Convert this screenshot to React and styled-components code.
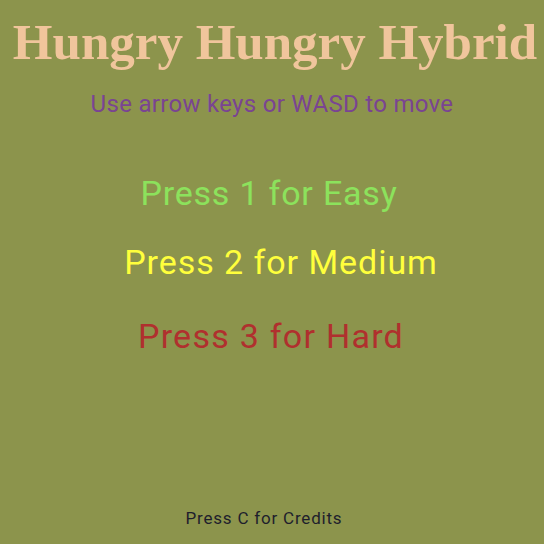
import React from 'react';
import styled, { createGlobalStyle } from 'styled-components';

const GlobalStyle = createGlobalStyle`
    html, body {
        margin: 0;
        padding: 0;
        background: #8c944c;
    }
`;

const Screen = styled.div`
    width: 544px;
    height: 544px;
    background: #8c944c;
    display: flex;
    flex-direction: column;
    align-items: center;
    font-family: Roboto, "Liberation Sans", sans-serif;
    overflow: hidden;
`;

const Title = styled.h1`
    margin: 12px 0 0 6px;
    font-family: "Liberation Serif", serif;
    font-weight: bold;
    font-size: 51px;
    line-height: 60px;
    letter-spacing: 0px;
    color: #f0c59c;
    white-space: nowrap;
`;

const Hint = styled.p`
    margin: 18px 0 0;
    font-size: 24px;
    line-height: 28px;
    letter-spacing: 0.3px;
    color: #7a4492;
`;

const Option = styled.p`
    margin: ${p => p.$top}px 0 0 ${p => p.$shift || 0}px;
    font-size: 34px;
    line-height: 40px;
    letter-spacing: ${p => p.$spacing}px;
    color: ${p => p.$color};
    white-space: nowrap;
`;

const Credits = styled.p`
    margin: auto 16px 16px 0;
    font-size: 17px;
    line-height: 20px;
    letter-spacing: 0.8px;
    color: #1e1e2c;
`;

export default function App() {
    return (
        <Screen>
            <GlobalStyle />
            <Title>Hungry Hungry Hybrid</Title>
            <Hint>Use arrow keys or WASD to move</Hint>
            <Option $top={55} $spacing={0.8} $shift={-6} $color="#8ce25c">Press 1 for Easy</Option>
            <Option $top={29} $spacing={0.95} $shift={18} $color="#ffff3c">Press 2 for Medium</Option>
            <Option $top={34} $spacing={1.25} $shift={-2} $color="#b0302e">Press 3 for Hard</Option>
            <Credits>Press C for Credits</Credits>
        </Screen>
    );
}
